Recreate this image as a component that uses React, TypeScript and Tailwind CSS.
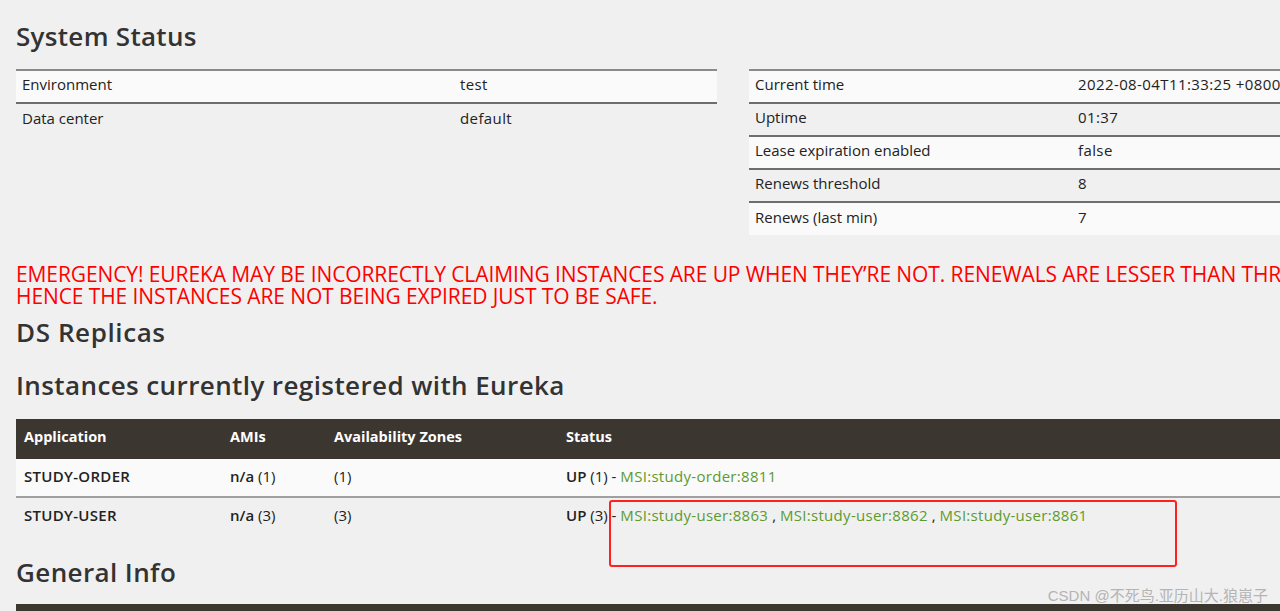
const body = { fontFamily: '"Open Sans", "Noto Sans", sans-serif' };

const leftRows = [
  ['Environment', 'test'],
  ['Data center', 'default'],
];

const rightRows = [
  ['Current time', '2022-08-04T11:33:25 +0800'],
  ['Uptime', '01:37'],
  ['Lease expiration enabled', 'false'],
  ['Renews threshold', '8'],
  ['Renews (last min)', '7'],
];

function InfoTable({ rows, labelWidth }: { rows: string[][]; labelWidth: string }) {
  return (
    <table className="w-full border-collapse border-t-2 border-[#8a8a8a] text-[15px] leading-[20px] text-[#222]">
      <tbody>
        {rows.map(([k, v], i) => (
          <tr
            key={k}
            className={`${i % 2 === 0 ? 'bg-[#fafafa]' : ''} ${i < rows.length - 1 ? 'border-b-2 border-[#6e6e6e]' : ''}`}
          >
            <td className={`${labelWidth} h-[33px] px-1.5 pb-[5px] align-middle`}>{k}</td>
            <td className="h-[33px] px-1.5 pb-[5px] align-middle tracking-[0.4px] whitespace-nowrap">{v}</td>
          </tr>
        ))}
      </tbody>
    </table>
  );
}

const apps = [
  { name: 'STUDY-ORDER', n: 1, links: ['MSI:study-order:8811'] },
  { name: 'STUDY-USER', n: 3, links: ['MSI:study-user:8863', 'MSI:study-user:8862', 'MSI:study-user:8861'] },
];

export default function App() {
  return (
    <div className="relative w-full h-[611px] overflow-hidden bg-[#f0f0f0]" style={body}>
      <div className="w-[1466px] px-4">
        <h2 className="pt-[19px] h-[69px] text-[26px] leading-[34px] font-semibold text-[#333] tracking-[0.3px]">
          System Status
        </h2>
        <div className="grid grid-cols-2 gap-8">
          <div>
            <InfoTable rows={leftRows} labelWidth="w-[438px]" />
          </div>
          <div>
            <InfoTable rows={rightRows} labelWidth="w-[323px]" />
          </div>
        </div>

        <h4 className="mt-[28px] whitespace-nowrap text-[21px] leading-[22px] text-[#ff0000] uppercase tracking-[-0.1px]">
          EMERGENCY! EUREKA MAY BE INCORRECTLY CLAIMING INSTANCES ARE UP WHEN THEY’RE NOT. RENEWALS ARE LESSER THAN THRESHOLD AND
          <br />
          HENCE THE INSTANCES ARE NOT BEING EXPIRED JUST TO BE SAFE.
        </h4>

        <h2 className="mt-[9px] text-[26px] leading-[32px] font-semibold text-[#333] tracking-[0.6px]">DS Replicas</h2>
        <h2 className="mt-[21px] text-[26px] leading-[32px] font-semibold text-[#333] tracking-[0.4px]">
          Instances currently registered with Eureka
        </h2>

        <table className="mt-[18px] w-full border-collapse text-[15px] leading-[20px] text-[#222]">
          <thead>
            <tr className="bg-[#3c3631] text-white text-left text-[14.5px]">
              <th className="h-[40px] px-2 pb-[4px] w-[206px] font-bold">Application</th>
              <th className="h-[40px] px-2 pb-[4px] w-[104px] font-bold">AMIs</th>
              <th className="h-[40px] px-2 pb-[4px] w-[232px] font-bold">Availability Zones</th>
              <th className="h-[40px] px-2 pb-[4px] font-bold">Status</th>
            </tr>
          </thead>
          <tbody>
            {apps.map((a, i) => (
              <tr key={a.name} className={i === 0 ? 'bg-[#fafafa] border-b-2 border-[#a0a0a0]' : ''}>
                <td className="h-[38px] px-2 pb-[4px] font-semibold tracking-[0.3px]">{a.name}</td>
                <td className="h-[38px] px-2 pb-[4px]">
                  <b className="font-semibold">n/a</b> ({a.n})
                </td>
                <td className="h-[38px] px-2 pb-[4px]">({a.n})</td>
                <td className="h-[38px] px-2 pb-[4px]">
                  <b className="font-semibold">UP</b> ({a.n}) -{' '}
                  {a.links.map((l, j) => (
                    <span key={l}>
                      {j > 0 && ' , '}
                      <a className="text-[#5d9b2e] tracking-[0.3px]">{l}</a>
                    </span>
                  ))}
                </td>
              </tr>
            ))}
          </tbody>
        </table>

        <h2 className="mt-[21px] text-[26px] leading-[32px] font-semibold text-[#333] tracking-[0.4px]">General Info</h2>
        <div className="mt-[16px] h-[40px] bg-[#3c3631]" />
      </div>

      <div className="absolute left-[609px] top-[500px] w-[568px] h-[67px] border-2 border-[#ff2020] rounded-[3px]" />
      <div
        className="absolute right-[12px] top-[586px] text-[15px] leading-[20px] text-[#b4b4b4]"
        style={{ fontFamily: '"Liberation Sans", "Noto Sans CJK SC", sans-serif' }}
      >
        CSDN @不死鸟.亚历山大.狼崽子
      </div>
    </div>
  );
}
